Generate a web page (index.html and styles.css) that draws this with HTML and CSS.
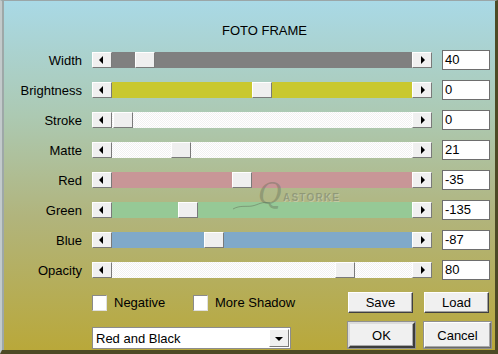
FILE: index.html
```html
<!DOCTYPE html>
<html>
<head>
<meta charset="utf-8">
<link rel="stylesheet" href="styles.css">
</head>
<body>
<div class="window">
  <div class="title">FOTO FRAME</div>
  <div class="rows">
    <div class="row"><span class="label">Width</span><div class="scroll"><span class="arrow left"><i></i></span><div class="track t-gray"><span class="thumb" style="left:23px"></span></div><span class="arrow right"><i></i></span></div><div class="field">40</div></div>
    <div class="row"><span class="label">Brightness</span><div class="scroll"><span class="arrow left"><i></i></span><div class="track t-yellow"><span class="thumb" style="left:140px"></span></div><span class="arrow right"><i></i></span></div><div class="field">0</div></div>
    <div class="row"><span class="label">Stroke</span><div class="scroll"><span class="arrow left"><i></i></span><div class="track t-white"><span class="thumb" style="left:1px"></span></div><span class="arrow right"><i></i></span></div><div class="field">0</div></div>
    <div class="row"><span class="label">Matte</span><div class="scroll"><span class="arrow left"><i></i></span><div class="track t-white"><span class="thumb" style="left:59px"></span></div><span class="arrow right"><i></i></span></div><div class="field">21</div></div>
    <div class="row"><span class="label">Red</span><div class="scroll"><span class="arrow left"><i></i></span><div class="track t-red"><span class="thumb" style="left:120px"></span></div><span class="arrow right"><i></i></span></div><div class="field">-35</div></div>
    <div class="row"><span class="label">Green</span><div class="scroll"><span class="arrow left"><i></i></span><div class="track t-green"><span class="thumb" style="left:66px"></span></div><span class="arrow right"><i></i></span></div><div class="field">-135</div></div>
    <div class="row"><span class="label">Blue</span><div class="scroll"><span class="arrow left"><i></i></span><div class="track t-blue"><span class="thumb" style="left:92px"></span></div><span class="arrow right"><i></i></span></div><div class="field">-87</div></div>
    <div class="row"><span class="label">Opacity</span><div class="scroll"><span class="arrow left"><i></i></span><div class="track t-white"><span class="thumb" style="left:223px"></span></div><span class="arrow right"><i></i></span></div><div class="field">80</div></div>
  </div>
  <div class="opts">
    <label class="check first"><span class="box"></span>Negative</label>
    <label class="check"><span class="box"></span>More Shadow</label>
    <div class="btns">
      <span class="btn">Save</span>
      <span class="btn">Load</span>
    </div>
  </div>
  <div class="bottom">
    <div class="combo"><span class="combo-text">Red and Black</span><span class="combo-btn"><i></i></span></div>
    <div class="btns2">
      <span class="btn big default">OK</span>
      <span class="btn big">Cancel</span>
    </div>
  </div>
  <div class="watermark">
    <svg class="tail" width="40" height="16" viewBox="0 0 40 16"><path d="M1 14 C8 10 14 12 20 11 C26 10 30 6 38 8" fill="none" stroke="rgba(90,100,80,0.45)" stroke-width="1"/></svg>
    <span class="wm-q">Q</span><span class="wm-text">ASTORKE</span>
  </div>
</div>
</body>
</html>
```
FILE: styles.css
```css
* { box-sizing: border-box; }
html, body { margin: 0; padding: 0; }
body {
  width: 498px;
  height: 354px;
  font-family: "Liberation Sans", Arial, sans-serif;
  font-size: 13px;
  color: #000;
  overflow: hidden;
}
.window {
  position: relative;
  width: 498px;
  height: 354px;
  border-top: 1px solid #9aa6a8;
  border-left: 2px solid #c2cacb;
  border-right: 3px solid #4d4a25;
  border-bottom: 4px solid #4d4a25;
  padding-left: 2px;
  box-shadow: inset 2px 0 0 #9ea8a8;
  background: linear-gradient(#a9d9e6 0%, #acc9b2 33%, #b1b47c 62%, #b9a83a 100%);
}
.title {
  padding-top: 22px;
  line-height: 15px;
  height: 37px;
  padding-left: 218px;
}
.rows { margin-top: 7px; }
.row {
  display: grid;
  grid-template-columns: 78px 340px 48px;
  column-gap: 10px;
  align-items: center;
  height: 30px;
}
.label { text-align: right; line-height: 15px; }
.scroll {
  display: flex;
  height: 16px;
}
.arrow {
  width: 20px;
  height: 16px;
  background: #f0f0f0;
  border: 1px solid;
  border-color: #ffffff #7a7a7a #7a7a7a #ffffff;
  display: flex;
  align-items: center;
  justify-content: center;
  flex: none;
}
.arrow i {
  width: 0; height: 0;
  border-top: 4px solid transparent;
  border-bottom: 4px solid transparent;
}
.arrow.left i { border-right: 4px solid #000; margin-right: 2px; }
.arrow.right i { border-left: 4px solid #000; margin-left: 2px; }
.track {
  position: relative;
  flex: 1;
  height: 16px;
}
.t-gray { background: #808080; }
.t-yellow { background: #c9c82f; }
.t-red { background: #c89697; }
.t-green { background: #96c996; }
.t-blue { background: #80a9c9; }
.t-white {
  background: repeating-conic-gradient(#ffffff 0 25%, #f1f1f1 0 50%) 0 0 / 2px 2px;
}
.thumb {
  position: absolute;
  top: 0;
  width: 20px;
  height: 16px;
  background: #efefef;
  border: 1px solid;
  border-color: #ffffff #7a7a7a #7a7a7a #ffffff;
}
.field {
  width: 48px;
  height: 20px;
  background: #fff;
  border: 1px solid #6e6e6e;
  padding-left: 2px;
  line-height: 18px;
}
.opts {
  display: flex;
  align-items: center;
  height: 21px;
  margin-top: 7px;
  padding-left: 88px;
}
.check {
  display: flex;
  align-items: center;
  gap: 7px;
}
.check.first { width: 101px; }
.box {
  width: 15px;
  height: 16px;
  background: #fff;
  border: 1px solid;
  border-color: #8a8a8a #e0e0e0 #e0e0e0 #8a8a8a;
}
.btns {
  margin-left: auto;
  margin-right: 6px;
  display: flex;
  gap: 11px;
}
.btn {
  width: 65px;
  height: 21px;
  background: #f0f0f0;
  border: 1px solid;
  border-color: #ffffff #404040 #404040 #ffffff;
  box-shadow: inset -1px -1px 0 #a0a0a0;
  display: flex;
  align-items: center;
  justify-content: center;
}
.bottom {
  display: flex;
  align-items: flex-start;
  margin-top: 9px;
  padding-left: 88px;
}
.combo {
  margin-top: 5px;
  width: 199px;
  height: 22px;
  background: #fff;
  border: 1px solid #8c8c8c;
  display: flex;
  align-items: center;
  justify-content: space-between;
  padding: 0 1px 0 3px;
}
.combo-btn {
  width: 20px;
  height: 18px;
  background: #f0f0f0;
  border: 1px solid;
  border-color: #ffffff #7a7a7a #7a7a7a #ffffff;
  display: flex;
  align-items: center;
  justify-content: center;
}
.combo-btn i {
  width: 0; height: 0;
  border-left: 4px solid transparent;
  border-right: 4px solid transparent;
  border-top: 4px solid #000;
  margin-top: 1px;
}
.btns2 {
  margin-left: auto;
  margin-right: 4px;
  display: flex;
  gap: 9px;
}
.btn.big {
  width: 67px;
  height: 26px;
  border-color: #ffffff #6a6a6a #6a6a6a #ffffff;
  box-shadow: inset -1px -1px 0 #a8a8a8;
  outline: 1px solid #909090;
  outline-offset: 0;
}
.btn.default {
  border: 2px solid;
  border-color: #dcdcdc #3c3c3c #3c3c3c #dcdcdc;
}
.watermark {
  position: absolute;
  left: 226px;
  top: 180px;
  width: 120px;
  height: 30px;
  pointer-events: none;
}
.tail { position: absolute; left: 4px; top: 14px; }
.wm-q {
  position: absolute;
  left: 30px;
  top: -2px;
  font-family: "DejaVu Serif", "Liberation Serif", serif;
  font-style: italic;
  font-size: 29px;
  line-height: 30px;
  color: rgba(95, 105, 85, 0.4);
}
.wm-text {
  position: absolute;
  left: 55px;
  top: 11px;
  font-size: 10px;
  line-height: 12px;
  font-weight: bold;
  letter-spacing: 1.2px;
  color: rgba(110, 120, 100, 0.5);
  text-shadow: 1px 1px 0 rgba(255, 255, 255, 0.25);
}
```
